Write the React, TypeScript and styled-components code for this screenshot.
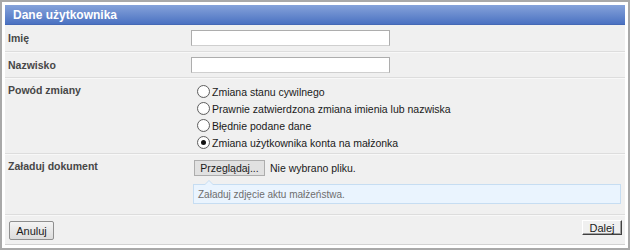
import styled, { createGlobalStyle } from 'styled-components';

const GlobalStyle = createGlobalStyle`
  html, body {
    margin: 0;
    padding: 0;
    background: #ffffff;
  }
  body {
    font-family: 'Liberation Sans', Arial, sans-serif;
  }
`;

const Frame = styled.div`
  width: 630px;
  height: 250px;
  box-sizing: border-box;
  border: 2px solid #a9a9a9;
  padding: 3px;
  background: #ffffff;
`;

const Panel = styled.div`
  height: 240px;
  display: flex;
  flex-direction: column;
  background: #f0f0f0;
  border-bottom: 1px solid #d2d2d2;
  box-sizing: border-box;
`;

const Header = styled.div`
  height: 20px;
  flex: none;
  box-sizing: border-box;
  padding: 0 8px;
  display: flex;
  align-items: center;
  background: linear-gradient(#86a3da, #4b72c2);
  border-bottom: 1px solid #4569b5;
  color: #ffffff;
  font-weight: bold;
  font-size: 12px;
`;

// height is the content height, the separator line comes on top of it
const Row = styled.div<{ $h: number; $top?: boolean }>`
  height: ${(p) => p.$h}px;
  flex: none;
  display: flex;
  align-items: ${(p) => (p.$top ? 'flex-start' : 'center')};
  padding-left: 3px;
  border-bottom: 1px solid #dddddd;
  box-shadow: 0 1px 0 #f8f8f8;
`;

const Label = styled.div<{ $top?: boolean }>`
  width: 183px;
  flex: none;
  font-size: 10.5px;
  line-height: 14px;
  font-weight: bold;
  color: #474747;
  padding-top: ${(p) => (p.$top ? '5px' : '0')};
`;

const Field = styled.div`
  flex: 1;
  display: flex;
  flex-direction: column;
`;

const TextInput = styled.input`
  width: 199px;
  height: 16px;
  box-sizing: border-box;
  margin: 0;
  padding: 0 2px;
  border: 1px solid #adadad;
  border-bottom-color: #cfcfcf;
  background: #ffffff;
  outline: none;
`;

const RadioList = styled.div`
  padding: 5px 0 0 6px;
  display: flex;
  flex-direction: column;
`;

const RadioLine = styled.label`
  height: 17px;
  display: flex;
  align-items: center;
  font-size: 10.5px;
  color: #1a1a1a;
`;

const RadioDot = styled.span<{ $checked?: boolean }>`
  width: 11px;
  height: 11px;
  border-radius: 50%;
  border: 1px solid #5f5f5f;
  background: radial-gradient(circle at 50% 40%, #ffffff 55%, #e4e4e4);
  margin-right: 2px;
  display: flex;
  align-items: center;
  justify-content: center;
  flex: none;

  &::after {
    content: '';
    width: 5px;
    height: 5px;
    border-radius: 50%;
    background: #111111;
    display: ${(p) => (p.$checked ? 'block' : 'none')};
  }
`;

const FileLine = styled.div`
  display: flex;
  align-items: center;
  margin: 6px 0 0 3px;
  font-size: 10.5px;
  color: #1a1a1a;
`;

const BrowseButton = styled.button`
  height: 16px;
  width: 71px;
  box-sizing: border-box;
  margin: 0 5px 0 0;
  padding: 0;
  border: 1px solid #adadad;
  background: #e1e1e1;
  font-family: 'Liberation Sans', Arial, sans-serif;
  font-size: 10.5px;
  color: #1a1a1a;
`;

const Hint = styled.div`
  position: relative;
  margin: 8px 4px 0 2px;
  height: 20px;
  box-sizing: border-box;
  border: 1px solid #c6ddf2;
  background: #eaf4fe;
  padding-left: 4px;
  display: flex;
  align-items: center;
  font-size: 10px;
  color: #6e6e6e;

  &::before,
  &::after {
    content: '';
    position: absolute;
    left: 10px;
    width: 0;
    height: 0;
    border-left: 5px solid transparent;
    border-right: 5px solid transparent;
  }
  &::before {
    top: -5px;
    border-bottom: 5px solid #c6ddf2;
  }
  &::after {
    top: -4px;
    border-bottom: 5px solid #eaf4fe;
  }
`;

const Footer = styled.div`
  flex: 1;
  display: flex;
  align-items: flex-start;
  justify-content: space-between;
  padding: 6px 3px 0 4px;
`;

const CancelButton = styled.button`
  width: 45px;
  height: 19px;
  box-sizing: border-box;
  margin: 0;
  padding: 0;
  border: 1px solid #8f8f8f;
  border-radius: 2px;
  background: linear-gradient(#f4f4f4, #dcdcdc);
  font-family: 'Liberation Sans', Arial, sans-serif;
  font-size: 11px;
  color: #1a1a1a;
`;

const NextButton = styled.button`
  width: 40px;
  height: 15px;
  box-sizing: border-box;
  margin: -1px 0 0 0;
  padding: 0;
  border: 1px solid;
  border-color: #ffffff #404040 #404040 #ffffff;
  box-shadow: inset -1px -1px 0 #a0a0a0;
  background: #f0f0f0;
  font-family: 'Liberation Sans', Arial, sans-serif;
  font-size: 11px;
  line-height: 12px;
  color: #1a1a1a;
`;

const reasons = [
  'Zmiana stanu cywilnego',
  'Prawnie zatwierdzona zmiana imienia lub nazwiska',
  'Błędnie podane dane',
  'Zmiana użytkownika konta na małżonka',
];

const App = () => {
  const selected = 3;
  return (
    <>
      <GlobalStyle />
      <Frame>
        <Panel>
          <Header>Dane użytkownika</Header>
          <Row $h={26}>
            <Label>Imię</Label>
            <Field>
              <TextInput type="text" />
            </Field>
          </Row>
          <Row $h={25}>
            <Label>Nazwisko</Label>
            <Field>
              <TextInput type="text" />
            </Field>
          </Row>
          <Row $h={75} $top>
            <Label $top>Powód zmiany</Label>
            <Field>
              <RadioList>
                {reasons.map((r, i) => (
                  <RadioLine key={r}>
                    <RadioDot $checked={i === selected} />
                    {r}
                  </RadioLine>
                ))}
              </RadioList>
            </Field>
          </Row>
          <Row $h={60} $top>
            <Label $top>Załaduj dokument</Label>
            <Field>
              <FileLine>
                <BrowseButton type="button">Przeglądaj...</BrowseButton>
                Nie wybrano pliku.
              </FileLine>
              <Hint>Załaduj zdjęcie aktu małżeństwa.</Hint>
            </Field>
          </Row>
          <Footer>
            <CancelButton type="button">Anuluj</CancelButton>
            <NextButton type="button">Dalej</NextButton>
          </Footer>
        </Panel>
      </Frame>
    </>
  );
};

export default App;
